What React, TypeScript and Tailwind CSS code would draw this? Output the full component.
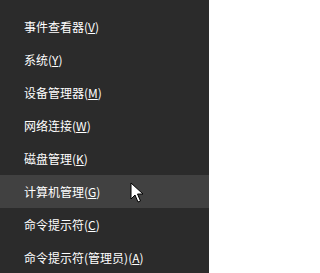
import React from "react";

type Item = { label: string; key: string; active?: boolean };

const items: Item[] = [
  { label: "事件查看器", key: "V" },
  { label: "系统", key: "Y" },
  { label: "设备管理器", key: "M" },
  { label: "网络连接", key: "W" },
  { label: "磁盘管理", key: "K" },
  { label: "计算机管理", key: "G", active: true },
  { label: "命令提示符", key: "C" },
  { label: "命令提示符(管理员)", key: "A" },
];

function Cursor() {
  return (
    <svg className="absolute left-[130px] top-[182px]" width="14" height="22" viewBox="0 0 14 22">
      <path
        d="M1 1 L1 17 L5 13 L8 20 L10.5 19 L7.5 12 L13 12 Z"
        fill="#ffffff"
        stroke="#000000"
        strokeWidth="1"
        strokeLinejoin="miter"
      />
    </svg>
  );
}

export default function App() {
  return (
    <div
      className="relative h-[273px] w-[209px] overflow-hidden bg-[#2b2b2b] pt-[10px] text-[12px] text-white"
      style={{ fontFamily: '"Noto Sans CJK SC", "Noto Sans", sans-serif' }}
    >
      <ul className="flex flex-col">
        {items.map((item) => (
          <li
            key={item.key}
            className={`flex h-[33px] items-center pl-[24px] ${item.active ? "bg-[#414141]" : ""}`}
          >
            <span>
              {item.label}(<span className="underline underline-offset-1">{item.key}</span>)
            </span>
          </li>
        ))}
      </ul>
      <Cursor />
    </div>
  );
}
